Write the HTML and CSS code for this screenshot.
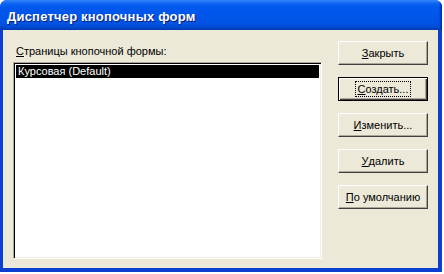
FILE: index.html
```html
<!DOCTYPE html>
<html lang="ru">
<head>
<meta charset="utf-8">
<title>Диспетчер кнопочных форм</title>
<link rel="stylesheet" href="styles.css">
</head>
<body>
<div class="window">
  <div class="titlebar"><span class="title">Диспетчер кнопочных форм</span></div>
  <div class="client">
    <div class="left">
      <div class="label"><u>С</u>траницы кнопочной формы:</div>
      <div class="listbox">
        <div class="item selected">Курсовая (Default)</div>
      </div>
    </div>
    <div class="buttons">
      <button class="btn"><u>З</u>акрыть</button>
      <button class="btn default"><span class="focus"><u>С</u>оздать...</span></button>
      <button class="btn"><u>И</u>зменить...</button>
      <button class="btn"><u>У</u>далить</button>
      <button class="btn"><u>П</u>о умолчанию</button>
    </div>
  </div>
</div>
</body>
</html>
```

FILE: styles.css
```css
html, body {
  margin: 0;
  padding: 0;
  background: #ffffff;
}
body {
  width: 444px;
  height: 274px;
  overflow: hidden;
  font-family: "Liberation Sans", Arial, sans-serif;
  font-size: 11px;
  color: #000;
}
.window {
  width: 442px;
  height: 272px;
  display: flex;
  flex-direction: column;
  border-radius: 7px 7px 0 0;
  overflow: hidden;
  background: #0a3fd0;
}
.titlebar {
  height: 30px;
  flex: none;
  display: flex;
  align-items: center;
  padding-left: 7px;
  background: linear-gradient(to bottom, #3a8cff 0px, #1168f4 3px, #0058ee 7px, #0055e8 18px, #0051e0 25px, #0045c8 28px, #003bb0 30px);
  box-shadow: inset -3px 0 2px -1px #0035b0;
}
.title {
  font-weight: bold;
  font-size: 13px;
  color: #fff;
  text-shadow: 1px 1px 0 #0a1e70;
  letter-spacing: 0.2px;
  margin-top: 2px;
}
.client {
  flex: 1;
  display: flex;
  background: #ece9d8;
  margin: 0 4px 4px 3px;
  padding: 11px 10px 9px 10px;
  gap: 16px;
}
.left {
  display: flex;
  flex-direction: column;
  width: 309px;
}
.label {
  height: 13px;
  line-height: 13px;
  padding-left: 3px;
  margin-top: 4px;
  margin-bottom: 4px;
}
.label u, .btn u {
  text-decoration: underline;
  text-underline-offset: 1px;
}
.listbox {
  flex: 1;
  background: #fff;
  border: 1px solid;
  border-color: #aca899 #ffffff #ffffff #aca899;
  box-shadow: inset 1px 1px 0 #000, inset -1px -1px 0 #f1efe2;
  padding: 2px 2px;
}
.item {
  height: 13px;
  line-height: 13px;
  padding-left: 2px;
}
.item.selected {
  background: #000;
  color: #fff;
}
.buttons {
  display: flex;
  flex-direction: column;
  gap: 12px;
  width: 90px;
}
.btn {
  width: 90px;
  height: 24px;
  padding: 0;
  margin: 0;
  font-family: "Liberation Sans", Arial, sans-serif;
  font-size: 11px;
  color: #000;
  background: #ece9d8;
  border: 1px solid;
  border-color: #ffffff #404040 #404040 #ffffff;
  box-shadow: inset -1px -1px 0 #aca899;
  display: flex;
  align-items: center;
  justify-content: center;
}
.btn.default {
  border: 1px solid #000;
  box-shadow: inset 1px 1px 0 #ffffff, inset -1px -1px 0 #404040, inset -2px -2px 0 #aca899;
}
.focus {
  outline: 1px dotted #000;
  padding: 1px 2px 0 2px;
  line-height: 13px;
}
```
